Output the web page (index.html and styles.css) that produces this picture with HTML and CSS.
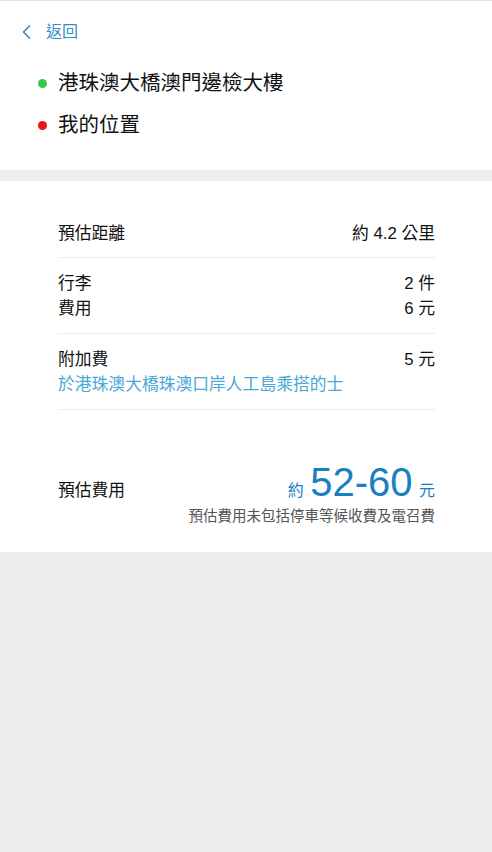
FILE: index.html
```html
<!DOCTYPE html>
<html lang="zh-Hant">
<head>
    <meta charset="UTF-8" />
    <title>預估費用</title>
    <link rel="stylesheet" href="styles.css">
</head>
<body>
    <div class="route">
        <a href="#" class="back">
            <svg class="back-icon" width="12" height="16" viewBox="0 0 12 16">
                <polyline points="9,1.5 2.5,8 9,14.5" fill="none" stroke="#3a8bc8" stroke-width="1.6" />
            </svg>
            <span>返回</span>
        </a>
        <div class="place"><i class="dot dot-green"></i>港珠澳大橋澳門邊檢大樓</div>
        <div class="place"><i class="dot dot-red"></i>我的位置</div>
    </div>

    <div class="card">
        <div class="section first">
            <div class="row"><span>預估距離</span><span>約 4.2 公里</span></div>
        </div>
        <div class="section">
            <div class="row"><span>行李</span><span>2 件</span></div>
            <div class="row"><span>費用</span><span>6 元</span></div>
        </div>
        <div class="section">
            <div class="row"><span>附加費</span><span>5 元</span></div>
            <div class="row hint">於港珠澳大橋珠澳口岸人工島乘搭的士</div>
        </div>
        <div class="total">
            <div class="total-row">
                <span class="total-label">預估費用</span>
                <span class="price"><small>約</small> <b>52-60</b> <small>元</small></span>
            </div>
            <div class="note">預估費用未包括停車等候收費及電召費</div>
        </div>
    </div>
</body>
</html>
```

FILE: styles.css
```css
* {
    margin: 0;
    padding: 0;
    box-sizing: border-box;
    font-family: "Liberation Sans", "Noto Sans CJK TC", sans-serif;
}
body {
    background-color: #eeeeee;
    color: #111;
    min-height: 100vh;
}
.route {
    background: #fff;
    border-top: 1px solid #e4e4e4;
    padding: 14px 0 24px 38px;
    margin-bottom: 11px;
}
.back {
    display: flex;
    align-items: center;
    gap: 13px;
    margin-left: -17px;
    color: #3a8bc8;
    text-decoration: none;
    font-size: 16px;
    line-height: 34px;
    margin-bottom: 13px;
}
.place {
    display: flex;
    align-items: center;
    font-size: 20.5px;
    line-height: 42px;
}
.dot {
    width: 9px;
    height: 9px;
    border-radius: 50%;
    margin-right: 11px;
}
.dot-green { background: #36c84a; }
.dot-red { background: #e8141a; }

.card {
    background: #fff;
    padding: 0 57px 0 58px;
}
.section {
    padding: 13px 0 12px;
    border-bottom: 1px solid #ececec;
}
.section.first { padding-top: 40px; padding-bottom: 11px; }
.row {
    display: flex;
    justify-content: space-between;
    font-size: 16.8px;
    line-height: 25px;
}
.row.hint { color: #4aa8d8; }
.total { padding: 57px 0 26px; }
.total-row {
    display: flex;
    justify-content: space-between;
    align-items: baseline;
    line-height: 30px;
}
.total-label { font-size: 16.8px; }
.price { color: #1a7fc1; }
.price small { font-size: 16px; }
.price b { font-weight: normal; font-size: 40px; margin: 0 2px; }
.note {
    text-align: right;
    color: #555;
    font-size: 14.5px;
    line-height: 20px;
}
```
